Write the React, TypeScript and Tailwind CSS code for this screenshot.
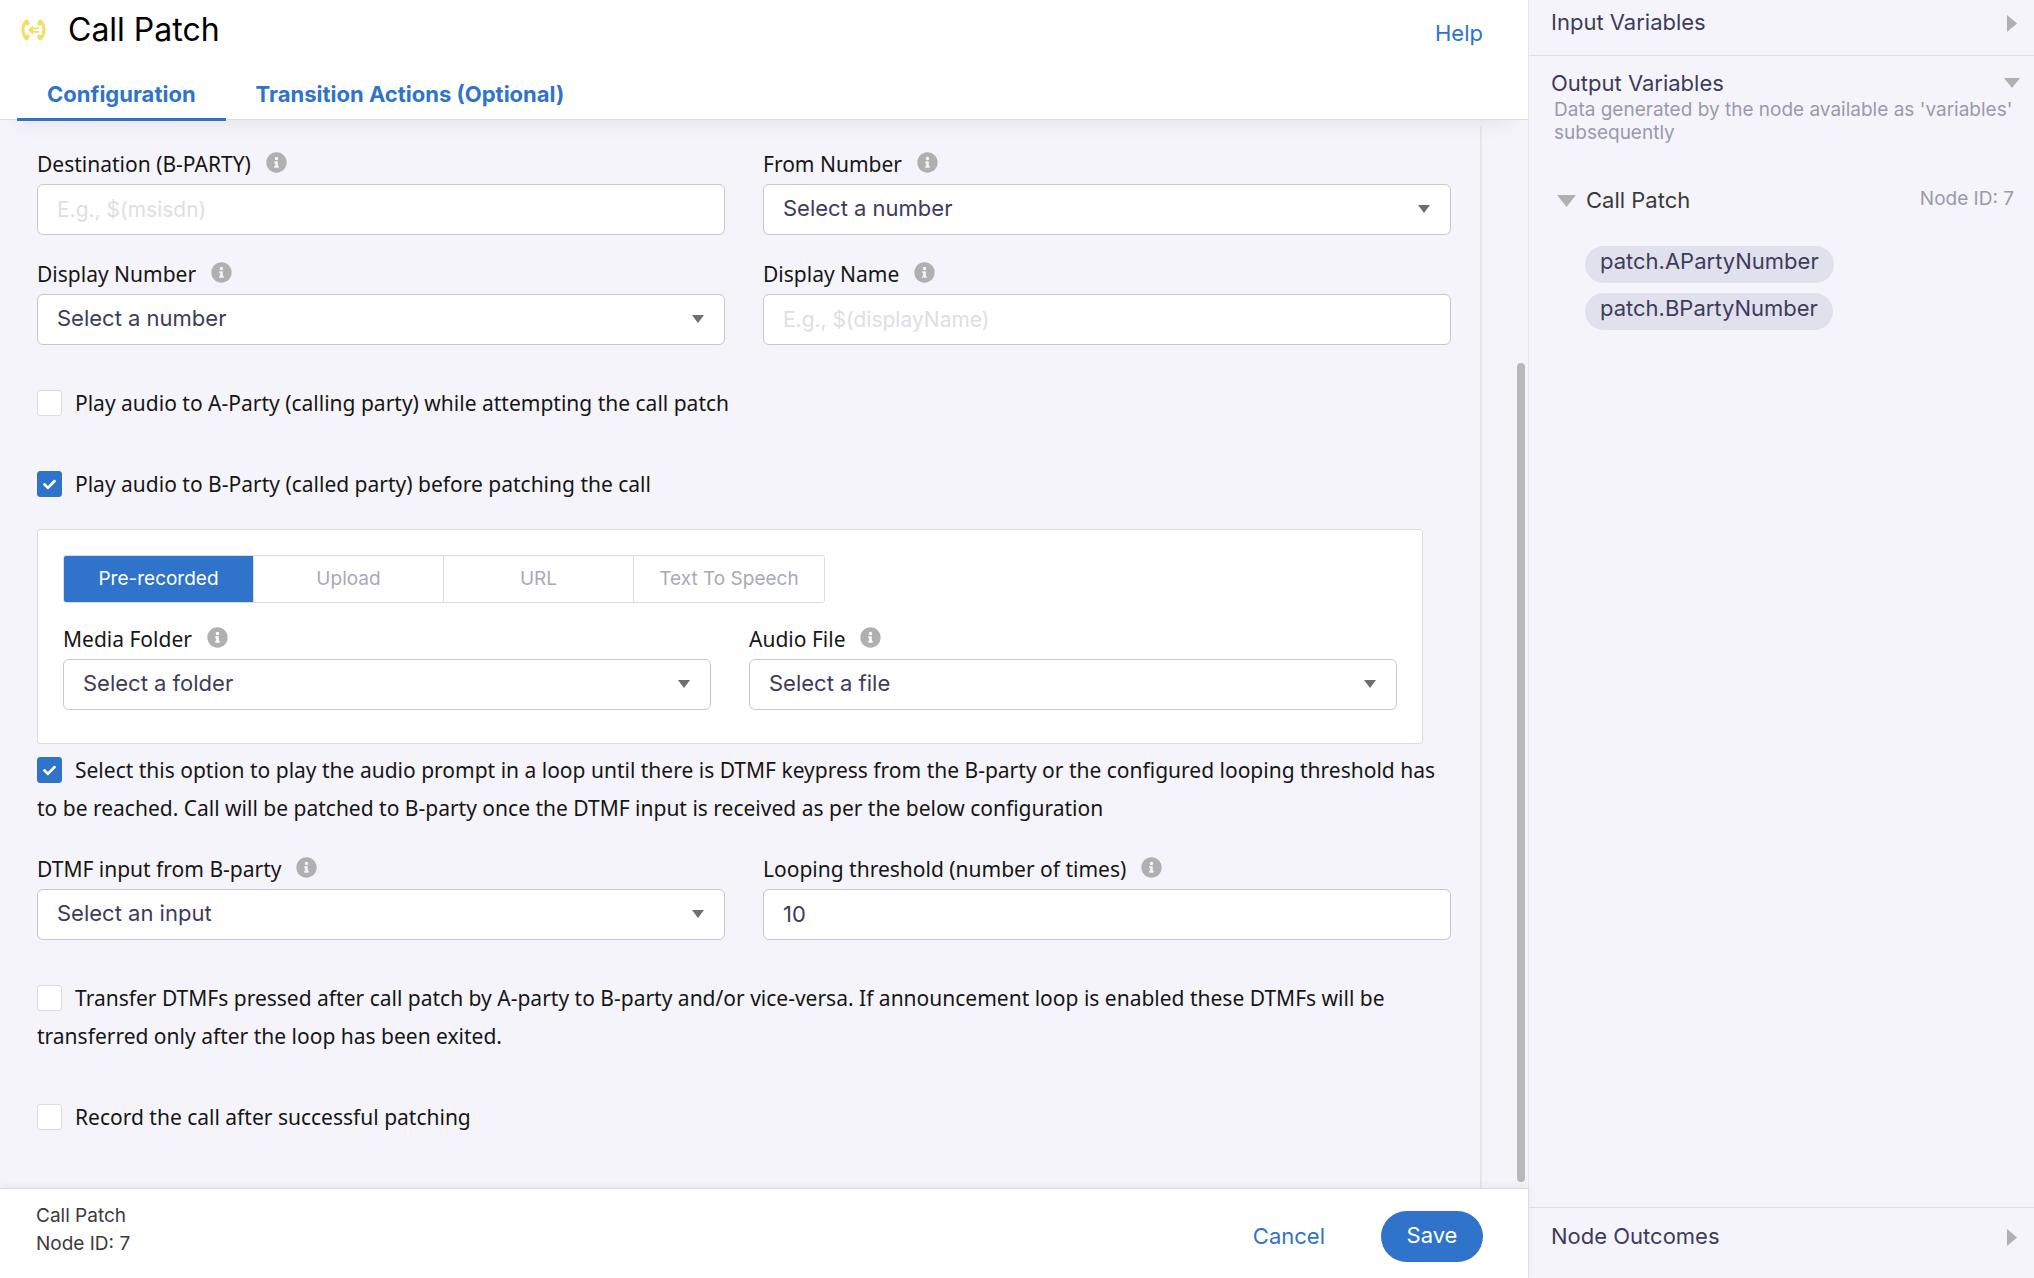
import { useState } from "react";
import type { ReactNode } from "react";

import { FaCheck, FaInfoCircle } from "react-icons/fa";

const audioSources = ["Pre-recorded", "Upload", "URL", "Text To Speech"];
const outputVariables = ["patch.APartyNumber", "patch.BPartyNumber"];

const PatchIcon = () => (
  <svg
    width={25}
    height={22}
    viewBox="0 0 25 22"
    fill="none"
    stroke="#f6dd62"
    strokeLinecap="round"
  >
    <path d="M5 3C1 6.500 1 15.500 5 19" strokeWidth={3} />
    <path d="M5.500 2.800 6.600 4.400M5.500 19.200 6.600 17.600" strokeWidth={4.2} />
    <path d="M20 3c4 3.500 4 12.500 0 16" strokeWidth={3} />
    <path
      d="M19.500 2.800 18.400 4.400M19.500 19.200 18.400 17.600"
      strokeWidth={4.2}
    />
    <path d="M11 9.300h7M11 12.900h7" strokeWidth={1.7} strokeLinecap="butt" />
    <path d="M7 11.100 12 6.200v9.800Z" fill="#f6dd62" stroke="none" />
  </svg>
);

const DownTriangle = ({ className }: { className: string }) => (
  <svg className={className} viewBox="0 0 10 6" preserveAspectRatio="none">
    <path d="M0 0h10L5 6Z" fill="currentColor" />
  </svg>
);

const RightTriangle = () => (
  <svg
    className="h-[17px] w-[10px] text-[#b0b0b0]"
    viewBox="0 0 6 10"
    preserveAspectRatio="none"
  >
    <path d="M0 0v10l6-5Z" fill="currentColor" />
  </svg>
);

type FieldProps = {
  id: string;
  label: string;
  children: ReactNode;
};

const Field = ({ id, label, children }: FieldProps) => (
  <div className="flex flex-col gap-[5px]">
    <div className="flex h-[30px] items-start gap-[15px]">
      <label
        htmlFor={id}
        className="font-['Noto_Sans',sans-serif] text-[21px] leading-[30px] text-[#161616]"
      >
        {label}
      </label>
      <FaInfoCircle size={21} className="mt-[3px] text-[#b0b0b0]" />
    </div>
    {children}
  </div>
);

const SelectField = ({
  id,
  label,
  option,
}: {
  id: string;
  label: string;
  option: string;
}) => (
  <Field id={id} label={label}>
    <div className="relative">
      <select
        id={id}
        className="block h-[51px] w-full appearance-none rounded-md border border-[#c8c8cc] bg-white px-[19px] pb-0.5 text-[22px] text-[#3d3c5a]"
      >
        <option>{option}</option>
      </select>
      <DownTriangle className="pointer-events-none absolute top-[21px] right-[21px] h-2 w-3 text-[#6e6e6e]" />
    </div>
  </Field>
);

const TextField = ({
  id,
  label,
  placeholder,
  defaultValue,
}: {
  id: string;
  label: string;
  placeholder?: string;
  defaultValue?: string;
}) => (
  <Field id={id} label={label}>
    <input
      id={id}
      type="text"
      placeholder={placeholder}
      defaultValue={defaultValue}
      className="block h-[51px] w-full rounded-md border border-[#c8c8cc] bg-white px-[19px] pb-0.5 text-[22px] text-[#3d3c5a] placeholder:text-[21px] placeholder:text-[#dedee3]"
    />
  </Field>
);

const CheckField = ({
  checked = false,
  children,
}: {
  checked?: boolean;
  children: ReactNode;
}) => (
  <label className="block font-['Noto_Sans',sans-serif] text-[21px] leading-[38px] text-[#161616]">
    <span className="relative mr-[13px] inline-block h-[26px] w-[25px] align-[-5px]">
      <input
        type="checkbox"
        defaultChecked={checked}
        className="peer block h-[26px] w-[25px] appearance-none rounded-[3px] border border-[#dcdcdf] bg-white checked:border-[#2f73ca] checked:bg-[#2f73ca]"
      />
      <FaCheck
        size={13}
        className="pointer-events-none absolute top-[7px] left-1.5 hidden text-white peer-checked:block"
      />
    </span>
    {children}
  </label>
);

const Header = () => (
  <header className="relative z-10 flex h-[120px] flex-col justify-between border-b border-[#dededf] bg-white shadow-[0_22px_18px_-18px_rgba(0,0,0,0.07)]">
    <div className="flex items-start justify-between pr-[45px] pl-[21px]">
      <div className="flex items-center gap-[22px]">
        <PatchIcon />
        <h1 className="text-[32px] leading-[60px] text-black">Call Patch</h1>
      </div>
      <a href="#help" className="text-[22px] leading-[66px] text-[#2f73ca]">
        Help
      </a>
    </div>
    <nav className="-mb-0.5 ml-[17px] flex text-[22px] leading-[48px] font-bold text-[#2f73ca]">
      <a href="#configuration" className="border-b-3 border-[#3673bd] px-[30px]">
        Configuration
      </a>
      <a href="#transition" className="px-[30px]">
        Transition Actions (Optional)
      </a>
    </nav>
  </header>
);

const AudioPanel = () => {
  const [source, setSource] = useState(audioSources[0]);

  return (
    <div className="mt-[26px] mr-7 rounded-[3px] border border-[#dcdcdf] bg-white px-[25px] pt-[25px] pb-[33px]">
      <div className="grid h-12 w-[762px] grid-cols-4 divide-x divide-[#dcdcdf] overflow-hidden rounded-[3px] border border-[#dcdcdf]">
        {audioSources.map((name) => (
          <button
            key={name}
            type="button"
            onClick={() => setSource(name)}
            className={
              name === source
                ? "bg-[#2f73ca] text-[19px] text-white"
                : "bg-white text-[19px] text-[#a9a9b8]"
            }
          >
            {name}
          </button>
        ))}
      </div>
      <div className="mt-[21px] grid grid-cols-2 gap-x-[38px]">
        <SelectField id="folder" label="Media Folder" option="Select a folder" />
        <SelectField id="file" label="Audio File" option="Select a file" />
      </div>
    </div>
  );
};

const Configuration = () => (
  <div className="relative flex flex-1 pt-1.5 pr-[46px] pl-[37px]">
    <form className="flex-1 border-r-2 border-[#e6e6e8] pt-[23px] pr-[29px] pb-[52px]">
      <div className="grid grid-cols-2 gap-x-[38px] gap-y-6">
        <TextField
          id="destination"
          label="Destination (B-PARTY)"
          placeholder="E.g., $(msisdn)"
        />
        <SelectField id="from" label="From Number" option="Select a number" />
        <SelectField
          id="display-number"
          label="Display Number"
          option="Select a number"
        />
        <TextField
          id="display-name"
          label="Display Name"
          placeholder="E.g., $(displayName)"
        />
      </div>

      <div className="mt-[39px] flex flex-col gap-[43px]">
        <CheckField>
          Play audio to A-Party (calling party) while attempting the call patch
        </CheckField>
        <CheckField checked>
          Play audio to B-Party (called party) before patching the call
        </CheckField>
      </div>

      <AudioPanel />

      <div className="mt-[7px]">
        <CheckField checked>
          Select this option to play the audio prompt in a loop until there is
          DTMF keypress from the B-party or the configured looping threshold has
          to be reached. Call will be patched to B-party once the DTMF input is
          received as per the below configuration
        </CheckField>
      </div>

      <div className="mt-[27px] grid grid-cols-2 gap-x-[38px]">
        <SelectField
          id="dtmf"
          label="DTMF input from B-party"
          option="Select an input"
        />
        <TextField
          id="threshold"
          label="Looping threshold (number of times)"
          defaultValue="10"
        />
      </div>

      <div className="mt-[39px] flex flex-col gap-[43px]">
        <CheckField>
          Transfer DTMFs pressed after call patch by A-party to B-party and/or
          vice-versa. If announcement loop is enabled these DTMFs will be
          transferred only after the loop has been exited.
        </CheckField>
        <CheckField>Record the call after successful patching</CheckField>
      </div>
    </form>
    {/* scroll thumb */}
    <div className="absolute top-[243px] right-[3px] bottom-1.5 w-2 rounded-full bg-[#b8b8ba]" />
  </div>
);

const Footer = () => (
  <footer className="relative z-10 flex h-[90px] items-start justify-between border-t border-[#dededf] bg-white pr-[45px] pl-9 shadow-[0_-2px_8px_rgba(0,0,0,0.06)]">
    <div className="pt-[13px] text-[19px] leading-7 text-[#3b3b3b]">
      <p>Call Patch</p>
      <p>Node ID: 7</p>
    </div>
    <div className="flex items-center gap-14 pt-[22px] text-[22px]">
      <button type="button" className="text-[#2f73ca]">
        Cancel
      </button>
      <button
        type="button"
        className="h-[51px] w-[102px] rounded-full bg-[#2f73ca] pb-0.5 text-white"
      >
        Save
      </button>
    </div>
  </footer>
);

const Sidebar = () => (
  <aside className="flex w-[506px] shrink-0 flex-col border-l border-[#e4e4ea] text-[22px] text-[#3d3c5a]">
    <section className="flex h-14 items-start justify-between border-b border-[#dedee4] pr-[17px] pl-[22px]">
      <h2 className="leading-[44px]">Input Variables</h2>
      <div className="pt-[15px]">
        <RightTriangle />
      </div>
    </section>

    <section className="flex-1 pt-3 pl-[22px]">
      <div className="flex items-center justify-between pr-[14px]">
        <h2 className="leading-[30px]">Output Variables</h2>
        <DownTriangle className="h-[10px] w-4 text-[#b0b0b0]" />
      </div>
      <p className="pr-4 pl-[3px] text-[19px] leading-[23px] text-[#9a9aab]">
        Data generated by the node available as 'variables' subsequently
      </p>

      <div className="mt-[39px] flex items-start pr-5 pl-1.5">
        <DownTriangle className="mt-3 h-3 w-[19px] text-[#b0b0b0]" />
        <h3 className="ml-2.5 flex-1 leading-[34px] text-[#3a3a3a]">
          Call Patch
        </h3>
        <span className="text-[19px] leading-[31px] text-[#9a9aab]">
          Node ID: 7
        </span>
      </div>

      <ul className="mt-[29px] flex flex-col items-start gap-2.5 pl-[34px]">
        {outputVariables.map((name) => (
          <li
            key={name}
            className="h-[37px] rounded-full bg-[#e1e1ee] px-[15px] leading-[31px]"
          >
            {name}
          </li>
        ))}
      </ul>
    </section>

    <section className="flex h-[71px] items-start justify-between border-t border-[#dedee4] pr-[17px] pl-[22px]">
      <h2 className="leading-[57px]">Node Outcomes</h2>
      <div className="pt-[21px]">
        <RightTriangle />
      </div>
    </section>
  </aside>
);

const App = () => (
  <div className="flex min-h-screen bg-[#f5f4fa] font-['Inter',sans-serif]">
    <main className="flex flex-1 flex-col">
      <Header />
      <Configuration />
      <Footer />
    </main>
    <Sidebar />
  </div>
);

export default App;
